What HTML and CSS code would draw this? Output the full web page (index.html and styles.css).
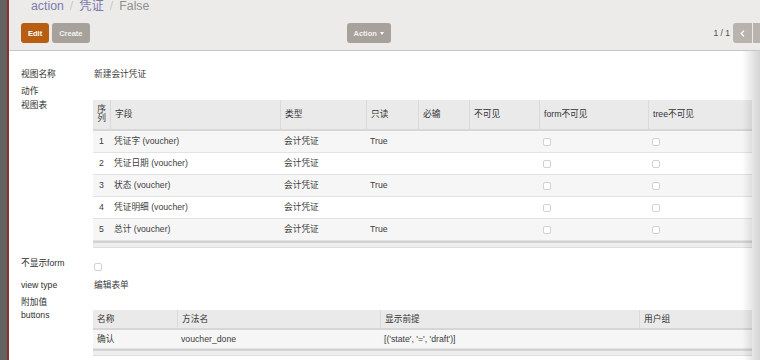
FILE: index.html
```html
<!DOCTYPE html>
<html lang="zh">
<head>
  <meta charset="UTF-8" />
  <title>凭证 - action</title>
  <link rel="stylesheet" href="styles.css">
</head>
<body>
  <div class="app">
    <div class="edge"></div>
    <div class="main">
      <div class="control-panel">
        <ol class="breadcrumb">
          <li><a href="#">action</a></li>
          <li><a href="#">凭证</a></li>
          <li class="active">False</li>
        </ol>
        <div class="cp-bottom">
          <div class="cp-buttons">
            <button class="btn btn-primary">Edit</button>
            <button class="btn btn-default">Create</button>
          </div>
          <div class="cp-sidebar">
            <button class="btn btn-default">Action <span class="caret"></span></button>
          </div>
          <div class="pager">
            <span class="pager-value">1 / 1</span>
            <button class="btn btn-pager">
              <svg width="5" height="7" viewBox="0 0 5 7"><path d="M4 0.6 L1.2 3.5 L4 6.4" fill="none" stroke="#fff" stroke-width="1.3"/></svg>
            </button>
            <button class="btn btn-pager">
              <svg width="5" height="7" viewBox="0 0 5 7"><path d="M1 0.6 L3.8 3.5 L1 6.4" fill="none" stroke="#fff" stroke-width="1.3"/></svg>
            </button>
          </div>
        </div>
      </div>

      <div class="sheet">
        <div class="field">
          <div class="field-label">视图名称</div>
          <div class="field-value field-text">新建会计凭证</div>
        </div>
        <div class="field field-action">
          <div class="field-label">动作</div>
        </div>
        <div class="field">
          <div class="field-label">视图表</div>
          <div class="field-value">
            <table class="list list-views">
              <colgroup>
                <col style="width: 17px">
                <col style="width: 170px">
                <col style="width: 86px">
                <col style="width: 52px">
                <col style="width: 51px">
                <col style="width: 70px">
                <col style="width: 109px">
                <col>
              </colgroup>
              <thead>
                <tr>
                  <th class="seq">序<br>列</th>
                  <th>字段</th>
                  <th>类型</th>
                  <th>只读</th>
                  <th>必输</th>
                  <th>不可见</th>
                  <th>form不可见</th>
                  <th>tree不可见</th>
                </tr>
              </thead>
              <tbody>
                <tr>
                  <td class="seq">1</td><td>凭证字 (voucher)</td><td>会计凭证</td><td>True</td><td></td><td></td>
                  <td><input class="check" type="checkbox" disabled></td><td><input class="check" type="checkbox" disabled></td>
                </tr>
                <tr>
                  <td class="seq">2</td><td>凭证日期 (voucher)</td><td>会计凭证</td><td></td><td></td><td></td>
                  <td><input class="check" type="checkbox" disabled></td><td><input class="check" type="checkbox" disabled></td>
                </tr>
                <tr>
                  <td class="seq">3</td><td>状态 (voucher)</td><td>会计凭证</td><td>True</td><td></td><td></td>
                  <td><input class="check" type="checkbox" disabled></td><td><input class="check" type="checkbox" disabled></td>
                </tr>
                <tr>
                  <td class="seq">4</td><td>凭证明细 (voucher)</td><td>会计凭证</td><td></td><td></td><td></td>
                  <td><input class="check" type="checkbox" disabled></td><td><input class="check" type="checkbox" disabled></td>
                </tr>
                <tr>
                  <td class="seq">5</td><td>总计 (voucher)</td><td>会计凭证</td><td>True</td><td></td><td></td>
                  <td><input class="check" type="checkbox" disabled></td><td><input class="check" type="checkbox" disabled></td>
                </tr>
              </tbody>
              <tfoot>
                <tr><td colspan="8"><div class="list-foot"></div></td></tr>
              </tfoot>
            </table>
          </div>
        </div>
        <div class="field field-noform">
          <div class="field-label">不显示form</div>
          <div class="field-value field-text"><input class="check check-field" type="checkbox" disabled></div>
        </div>
        <div class="field field-type">
          <div class="field-label">view type</div>
          <div class="field-value field-text">编辑表单</div>
        </div>
        <div class="field field-extra">
          <div class="field-label">附加值</div>
        </div>
        <div class="field field-buttons">
          <div class="field-label">buttons</div>
          <div class="field-value">
            <table class="list list-buttons">
              <colgroup>
                <col style="width: 84px">
                <col style="width: 203px">
                <col style="width: 259px">
                <col>
              </colgroup>
              <thead>
                <tr><th>名称</th><th>方法名</th><th>显示前提</th><th>用户组</th></tr>
              </thead>
              <tbody>
                <tr><td>确认</td><td>voucher_done</td><td>[('state', '=', 'draft')]</td><td></td></tr>
              </tbody>
              <tfoot>
                <tr><td colspan="4"><div class="list-foot"></div></td></tr>
              </tfoot>
            </table>
          </div>
        </div>
      </div>

      <div class="sheet-shadow"></div>
    </div>
  </div>
</body>
</html>
```

FILE: styles.css
```css
* {
  box-sizing: border-box;
}
html, body {
  margin: 0;
  height: 100%;
}
body {
  font-family: "Liberation Sans", "Noto Sans CJK SC", sans-serif;
  font-size: 8.7px;
  color: #3c3c3c;
  background: #fff;
  overflow: hidden;
}
.app {
  display: flex;
  height: 100vh;
}
.edge {
  width: 9px;
  flex: none;
  background: #626262;
  border-right: 2px solid #87302f;
}
.main {
  flex: 1;
  min-width: 0;
  position: relative;
}

/* control panel */
.control-panel {
  height: 51px;
  padding-left: 12px;
  background: #edebe9;
  border-bottom: 1px solid #c9c6c3;
  overflow: hidden;
}
.breadcrumb {
  list-style: none;
  margin: 0;
  padding: 0 0 0 10px;
  display: flex;
  font-size: 12.3px;
  line-height: 12px;
}
.breadcrumb li + li::before {
  content: "/";
  color: #cbc8c5;
  padding: 0 6px;
}
.breadcrumb a {
  color: #7c7bad;
  text-decoration: none;
}
.breadcrumb .active {
  color: #909090;
}
.cp-bottom {
  display: flex;
  align-items: center;
  margin-top: 11px;
}
.cp-buttons {
  display: flex;
  gap: 3px;
}
.cp-sidebar {
  margin-left: 257px;
}
.btn {
  height: 20px;
  padding: 0 7px;
  border: none;
  border-radius: 3px;
  font: bold 7.5px "Liberation Sans", sans-serif;
  color: #fff;
  cursor: pointer;
}
.btn-primary {
  background: #b75e12;
}
.btn-default {
  background: #a7a19c;
  color: #f4f2f0;
}
.caret {
  display: inline-block;
  margin-left: 1px;
  vertical-align: middle;
  border-top: 3px solid #fff;
  border-left: 2.5px solid transparent;
  border-right: 2.5px solid transparent;
}
.pager {
  margin-left: auto;
  margin-right: -12px;
  display: flex;
  align-items: center;
}
.pager-value {
  margin-right: 3px;
  font-size: 8.5px;
  color: #4a4a4a;
}
.btn-pager {
  width: 19px;
  padding: 0;
  border-radius: 0;
  background: #b9b3ae;
  display: flex;
  align-items: center;
  justify-content: center;
}
.btn-pager:first-of-type {
  border-radius: 3px 0 0 3px;
  margin-right: 1px;
}

/* form sheet */
.sheet {
  padding: 16px 8px 0 12px;
}
.field {
  display: flex;
  align-items: flex-start;
  line-height: 14px;
}
.field-label {
  width: 72px;
  flex: none;
  color: #2f2f2f;
}
.field-value {
  flex: 1;
  min-width: 0;
}
.field-text {
  padding-left: 1px;
}
.field-action { margin-top: 3px; }
.field-noform { margin-top: 8px; }
.field-type { margin-top: 7px; }
.field-extra { margin-top: 3px; }
.field-buttons { margin-top: -1px; }

.list {
  width: 100%;
  margin-top: 2px;
  border-spacing: 0;
  table-layout: fixed;
}
.list th {
  background: #eaeaea;
  color: #333;
  font-weight: normal;
  text-align: left;
  line-height: 9px;
  padding: 5px 4px 6px;
  border-bottom: 2px solid #d6d6d6;
  border-left: 1px solid #dadada;
}
.list th:first-child {
  border-left: none;
}
.list td {
  padding: 0 4px;
  line-height: 21px;
  white-space: nowrap;
  overflow: hidden;
  border-bottom: 1px solid #e3e3e3;
}
.list tbody tr:nth-child(odd) td {
  background: #f6f6f6;
}
.list .seq {
  text-align: center;
  padding: 0;
}
.list th.seq {
  padding: 5px 0 6px;
}
.list tfoot td {
  padding: 0;
  line-height: 0;
  font-size: 0;
  background: #eeeeee;
  border-top: 1px solid #d0d0d0;
  border-bottom: 1px solid #dedede;
}
.list-foot {
  height: 5px;
  border-top: 1px solid #d6d6d6;
}
.list-buttons th {
  line-height: 10px;
  padding: 4px 4px;
}
.list-buttons td {
  line-height: 18px;
}

.check {
  -webkit-appearance: none;
  appearance: none;
  width: 8px;
  height: 8px;
  margin: 0;
  border: 1px solid #d2d2d2;
  border-radius: 2px;
  background: #fff;
  vertical-align: middle;
}
.check-field {
  margin-top: 7px;
  vertical-align: top;
}

.sheet-shadow {
  position: absolute;
  top: 51px;
  right: 0;
  bottom: 0;
  width: 18px;
  background: linear-gradient(to right, rgba(0, 0, 0, 0), rgba(0, 0, 0, 0.17));
  pointer-events: none;
}
```
